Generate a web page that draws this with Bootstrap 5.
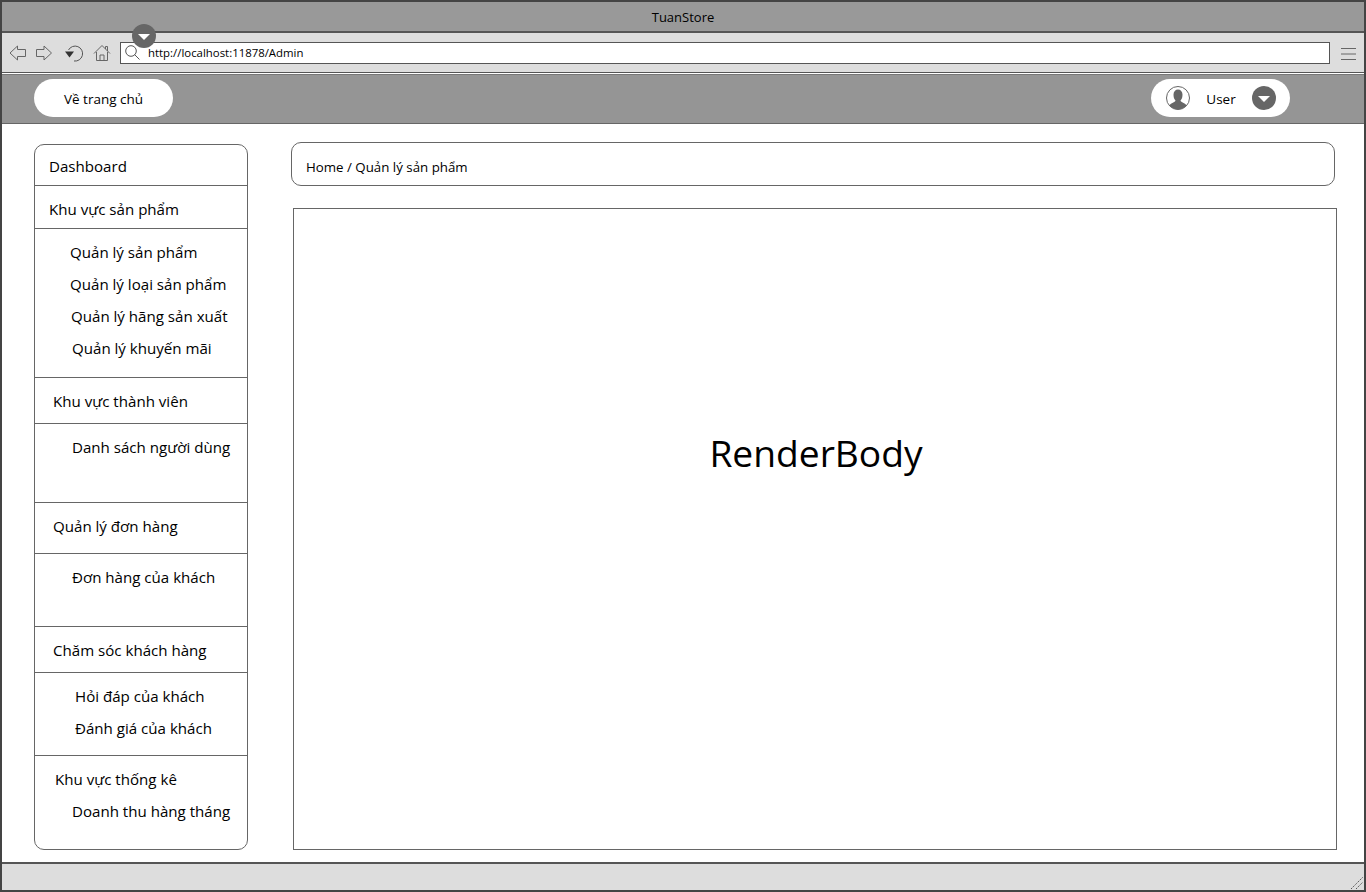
<!DOCTYPE html>
<html lang="en">
<head>
  <meta charset="UTF-8">
  <title>TuanStore</title>
  <meta name="viewport" content="width=device-width, initial-scale=1">
  <link href="https://cdn.jsdelivr.net/npm/bootstrap@5.3.0/dist/css/bootstrap.min.css" rel="stylesheet">
  <script src="https://cdn.jsdelivr.net/npm/bootstrap@5.3.0/dist/js/bootstrap.bundle.min.js"></script>
  <style>
    html, body { height: 100%; overflow: hidden; }
    body { font-family: "Open Sans", "Noto Sans", sans-serif; color: #000; background: #fff; }
    .win-frame { height: 892px; border: 2px solid #444; display: flex; flex-direction: column; position: relative; }
    .win-title { height: 31px; flex: none; background: #999; border-bottom: 2px solid #555; font-size: 13px; line-height: 30px; text-align: center; }
    .win-tools { height: 39px; flex: none; background: #ddd; padding: 0 7px 0 7px; }
    .tool-ic { width: 18px; height: 18px; flex: none; }
    .ic-fwd { margin-left: 8px; }
    .ic-reload { margin-left: 12px; }
    .ic-home { margin-left: 10px; }
    .url-box { flex: 1; height: 22px; margin: 0 9px; border: 1px solid #555; background: #fff; font-size: 11.4px; line-height: 19px; padding-left: 4px; gap: 8px; }
    .url-drop { position: absolute; left: 130px; top: 22px; }
    .round-drop { width: 24px; height: 24px; border-radius: 50%; background: #666; display: flex; align-items: center; justify-content: center; }
    .round-drop::after { content: ""; border-left: 6.5px solid transparent; border-right: 6.5px solid transparent; border-top: 6.5px solid #fff; margin-top: 2px; }
    .top-gap { height: 2px; flex: none; background: #fff; border-top: 1px solid #555; }
    .top-nav { height: 50px; flex: none; background: #959595; border-top: 1px solid #777; border-bottom: 1px solid #666; padding: 4px 74px 0 32px; }
    .pill-link { height: 38px; background: #fff; border-radius: 19px; font-size: 13.5px; }
    .pill-text { padding-top: 2px; }
    .home-pill { width: 139px; color: #000; text-decoration: none; }
    .user-pill { width: 139px; padding: 0 14px 0 15px; }
    .win-body { flex: 1; min-height: 0; padding: 18px 28px 12px 32px; gap: 43px; }
    .side-box { width: 214px; flex: none; margin-top: 2px; border: 1px solid #666; border-radius: 10px; font-size: 15.1px; }
    .side-row { border-bottom: 1px solid #666; display: flex; align-items: center; padding-left: 18px; }
    .side-row:last-child { border-bottom: 0; }
    .side-list { display: block; padding-top: 7px; }
    .side-sub { display: block; height: 32px; line-height: 32px; white-space: nowrap; }
    .row-dash { height: 41px; padding: 2px 0 0 14px; }
    .row-prod { height: 43px; padding: 4px 0 0 14px; }
    .list-prod { height: 149px; padding-left: 35px; }
    .row-member { height: 46px; padding-top: 2px; }
    .list-member { height: 79px; padding-left: 37px; }
    .row-order { height: 51px; padding-bottom: 4px; }
    .list-order { height: 73px; padding-left: 37px; }
    .row-care { height: 46px; padding-top: 2px; }
    .list-care { height: 83px; padding-left: 40px; }
    .list-stat { padding-left: 20px; }
    .sub-indent { padding-left: 17px; }
    .sub-hang { padding-left: 1px; }
    .sub-km { padding-left: 2px; }
    .crumb-box { height: 44px; border: 1px solid #666; border-radius: 10px; padding-left: 14px; font-size: 13.3px; line-height: 48px; margin-right: 1px; }
    .render-box { height: 642px; margin: 22px -1px 0 2px; border: 1px solid #666; font-size: 37.2px; padding: 0 0 152px 2px; }
    .win-status { height: 28px; flex: none; background: #ddd; border-top: 2px solid #555; }
  </style>
</head>
<body>
<div class="win-frame">
  <div class="win-title">TuanStore</div>
  <div class="win-tools d-flex align-items-center">
    <svg class="tool-ic" viewBox="0 0 18 18" fill="none" stroke="#666"><path d="M1 9 8.500 2V5.500H16.500V12.500H8.500V16Z"/></svg>
    <svg class="tool-ic ic-fwd" viewBox="0 0 18 18" fill="none" stroke="#666"><path d="M16.500 9 9 2V5.500H1.500V12.500H9V16Z"/></svg>
    <svg class="tool-ic ic-reload" viewBox="0 0 18 18" fill="none" stroke="#555"><path d="M3.500 6A7.500 7.500 0 1 1 9 17"/><path d="M0 7.500H9L4.500 13.500Z" fill="#333" stroke="none"/></svg>
    <svg class="tool-ic ic-home" viewBox="0 0 18 18" fill="none" stroke="#666"><path d="M1 9.500 9 1.500 17 9.500M3.500 8V16.500H14.500V8M7 16.500V11H11V16.500M12.500 5V2.500H14.500V7"/></svg>
    <div class="url-box d-flex align-items-center">
      <svg width="15" height="15" viewBox="0 0 15 15" fill="none" stroke="#555"><circle cx="6" cy="6" r="5.300"/><path d="M9.500 9.500 14.500 14.500"/></svg>
      <span>http://localhost:11878/Admin</span>
    </div>
    <svg class="tool-ic" viewBox="0 0 18 18" fill="none" stroke="#666"><path d="M2 4.500H17M2 10H17M2 15.500H17"/></svg>
  </div>
  <div class="url-drop round-drop"></div>
  <div class="top-gap"></div>
  <div class="top-nav d-flex justify-content-between align-items-start">
    <a href="#" class="pill-link home-pill d-flex align-items-center justify-content-center"><span class="pill-text">Về trang chủ</span></a>
    <div class="pill-link user-pill d-flex align-items-center justify-content-between">
      <svg width="24" height="24" viewBox="0 0 24 24" fill="none"><circle cx="12" cy="12" r="11.500" stroke="#666"/><path d="M3.500 19.500C5 16.500 9 16.500 9.500 14.500C8 13 7.500 11 7.500 8.500C7.500 5.500 9.500 3.500 12 3.500S16.500 5.500 16.500 8.500C16.500 11 16 13 14.500 14.500C15 16.500 19 16.500 20.500 19.500A11 11 0 0 1 3.500 19.500Z" fill="#666"/></svg>
      <span class="pill-text">User</span>
      <div class="round-drop"></div>
    </div>
  </div>
  <div class="win-body d-flex">
    <div class="side-box">
      <div class="side-row row-dash">Dashboard</div>
      <div class="side-row row-prod">Khu vực sản phẩm</div>
      <div class="side-row side-list list-prod">
        <span class="side-sub">Quản lý sản phẩm</span>
        <span class="side-sub">Quản lý loại sản phẩm</span>
        <span class="side-sub sub-hang">Quản lý hãng sản xuất</span>
        <span class="side-sub sub-km">Quản lý khuyến mãi</span>
      </div>
      <div class="side-row row-member">Khu vực thành viên</div>
      <div class="side-row side-list list-member"><span class="side-sub">Danh sách người dùng</span></div>
      <div class="side-row row-order">Quản lý đơn hàng</div>
      <div class="side-row side-list list-order"><span class="side-sub">Đơn hàng của khách</span></div>
      <div class="side-row row-care">Chăm sóc khách hàng</div>
      <div class="side-row side-list list-care">
        <span class="side-sub">Hỏi đáp của khách</span>
        <span class="side-sub">Đánh giá của khách</span>
      </div>
      <div class="side-row side-list list-stat">
        <span class="side-sub">Khu vực thống kê</span>
        <span class="side-sub sub-indent">Doanh thu hàng tháng</span>
      </div>
    </div>
    <div class="flex-grow-1">
      <div class="crumb-box">Home / Quản lý sản phẩm</div>
      <div class="render-box d-flex align-items-center justify-content-center">RenderBody</div>
    </div>
  </div>
  <div class="win-status d-flex justify-content-end align-items-end">
    <svg width="14" height="14" viewBox="0 0 14 14" stroke="#555" stroke-dasharray="1.500 1"><path d="M1 13 13 1M6 13 13 6"/></svg>
  </div>
</div>
</body>
</html>
